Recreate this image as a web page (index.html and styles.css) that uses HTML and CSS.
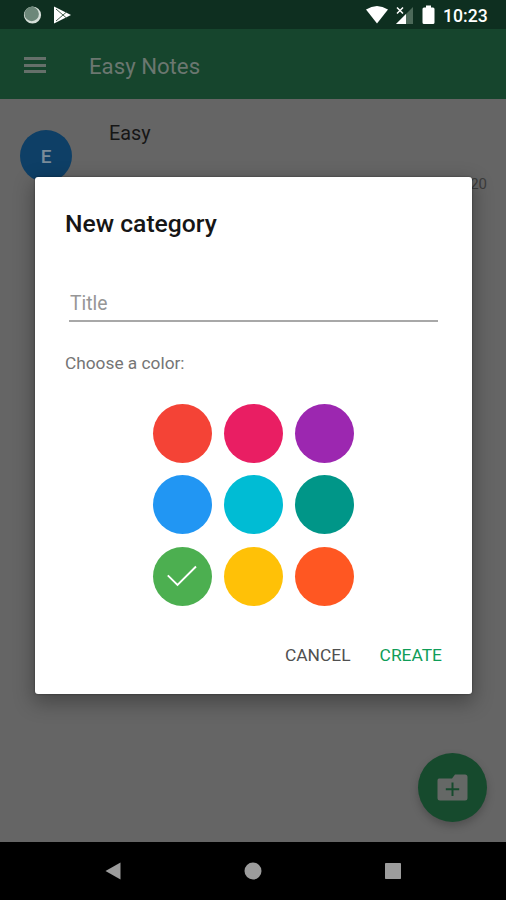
FILE: index.html
```html
<!DOCTYPE html>
<html lang="en">
<head>
<meta charset="utf-8">
<title>Easy Notes</title>
<link rel="stylesheet" href="styles.css">
</head>
<body>
<div class="screen">
  <header class="status">
    <svg class="status-left" width="50" height="20" viewBox="0 0 50 20">
      <circle cx="9.5" cy="10" r="8.6" fill="#d5ded8"/>
      <circle cx="8.7" cy="9" r="7.2" fill="#6c8779"/>
      <path d="M31 1.5 L48 10 L31 18.500Z" fill="#fff"/>
      <path d="M33 4 L43.500 13 M33 16 L43.500 7" stroke="#48604f" stroke-width="1" fill="none"/>
    </svg>
    <div class="status-right">
      <svg width="70" height="20" viewBox="0 0 70 20">
        <path d="M0 4.600 Q11 -2.600 22 4.600 L11 18.500Z" fill="#fff"/>
        <path d="M47 2 V19 H30Z" fill="#4c6959"/>
        <path d="M40 9 V19 H30Z" fill="#fff"/>
        <path d="M31 2.500 L37 8.500 M37 2.500 L31 8.500" stroke="#fff" stroke-width="1.500"/>
        <path d="M60 0.500 H65 V2.500 H67 Q68.500 2.500 68.500 4 V17.500 Q68.500 19 67 19 H58 Q56.500 19 56.500 17.500 V4 Q56.500 2.500 58 2.500 H60Z" fill="#fff"/>
      </svg>
      <span class="clock">10:23</span>
    </div>
  </header>
  <div class="appbar">
    <div class="menu"><i></i><i></i><i></i></div>
    <h1 class="app-title">Easy Notes</h1>
  </div>
  <main class="content">
    <div class="note">
      <div class="avatar">E</div>
      <div class="note-title">Easy</div>
      <div class="note-date">20</div>
    </div>
    <div class="fab">
      <svg width="31" height="27" viewBox="0 0 31 27">
        <path d="M2 4.500 H15 L18 0.500 H28 Q30.500 0.500 30.500 3 V24 Q30.500 26.500 28 26.500 H3 Q0.500 26.500 0.500 24 V6.500 Q0.500 4.500 2 4.500Z" fill="#656866"/>
        <path d="M15.500 8.500 V22 M8.800 15.300 H22.200" stroke="#164a2d" stroke-width="2"/>
      </svg>
    </div>
  </main>
  <nav class="navbar">
    <svg width="16" height="18" viewBox="0 0 16 18"><path d="M0.500 9 L15.500 0.500 V17.500Z" fill="#9c9c9c"/></svg>
    <svg width="18" height="18" viewBox="0 0 18 18"><circle cx="9" cy="9" r="8.500" fill="#9c9c9c"/></svg>
    <svg width="16" height="16" viewBox="0 0 16 16"><rect width="16" height="16" rx="0.700" fill="#9c9c9c"/></svg>
  </nav>
  <section class="dialog">
    <h2 class="dialog-title">New category</h2>
    <div class="field">Title</div>
    <p class="label">Choose a color:</p>
    <div class="swatches">
      <div class="swatch red"></div>
      <div class="swatch pink"></div>
      <div class="swatch purple"></div>
      <div class="swatch blue"></div>
      <div class="swatch cyan"></div>
      <div class="swatch teal"></div>
      <div class="swatch green">
        <svg width="30" height="22" viewBox="0 0 30 22"><path d="M0.800 10.300 L10.500 20 L29 1.500" fill="none" stroke="#fff" stroke-width="1.900"/></svg>
      </div>
      <div class="swatch amber"></div>
      <div class="swatch orange"></div>
    </div>
    <div class="actions">
      <span class="action">CANCEL</span>
      <span class="action primary">CREATE</span>
    </div>
  </section>
</div>
</body>
</html>
```
FILE: styles.css
```css
* { box-sizing: border-box; }
body { margin: 0; font-family: Roboto, "Liberation Sans", sans-serif; }
h1, h2, p { margin: 0; font-weight: 400; }
svg { display: block; }
.screen {
  position: relative;
  display: flex;
  flex-direction: column;
  width: 506px;
  height: 900px;
  overflow: hidden;
  background: #656565;
}
.status {
  display: flex;
  justify-content: space-between;
  height: 29px;
  padding: 5px 18px 0 23px;
  background: #0e2f20;
}
.status-right { display: flex; gap: 7px; }
.clock {
  color: #fff;
  font-size: 17.600px;
  font-weight: 500;
  line-height: 22px;
  width: 45px;
  white-space: nowrap;
}
.appbar {
  display: flex;
  align-items: center;
  height: 70px;
  padding: 2px 24px 0;
  background: #16452d;
}
.menu { display: flex; flex-direction: column; gap: 3.500px; width: 22px; margin-right: 43px; }
.menu i { height: 3px; background: #65706a; }
.app-title { padding-top: 1px; color: #6b7770; font-size: 22.200px; line-height: 28px; }
.content { position: relative; flex: 1; }
.note { display: flex; padding: 31px 19px 0 20px; }
.avatar {
  width: 52px;
  height: 52px;
  border-radius: 50%;
  background: #0e3f66;
  color: #7b8c99;
  font-size: 19px;
  font-weight: 500;
  line-height: 54px;
  text-align: center;
}
.note-title { margin: -9px 0 0 37px; color: #161616; font-size: 19.800px; line-height: 26px; }
.note-date { margin: 44px 0 0 auto; color: #3c3c3c; font-size: 15px; line-height: 20px; }
.fab {
  position: absolute;
  right: 19px;
  bottom: 20px;
  display: flex;
  align-items: center;
  justify-content: center;
  width: 69px;
  height: 69px;
  border-radius: 50%;
  background: #164a2d;
  box-shadow: 0 4px 8px rgba(0, 0, 0, .22);
}
.navbar {
  display: flex;
  align-items: center;
  justify-content: space-between;
  height: 58px;
  padding: 0 105px;
  background: #000;
}
.dialog {
  position: absolute;
  left: 35px;
  top: 177px;
  display: flex;
  flex-direction: column;
  width: 437px;
  height: 517px;
  padding: 31px 30px 0;
  border-radius: 3px;
  background: #fff;
  box-shadow: 0 0 2px rgba(0, 0, 0, .5), 0 7px 20px 2px rgba(0, 0, 0, .3);
}
.dialog-title { color: #161616; font-size: 24.700px; font-weight: 500; line-height: 32px; }
.field {
  height: 33px;
  margin: 49px 4px 0;
  padding: 1px 0 0 1px;
  border-bottom: 2px solid #a8a8a8;
  color: #969696;
  font-size: 19.300px;
  line-height: 28px;
}
.label { margin-top: 29px; color: #757575; font-size: 17.300px; line-height: 24px; }
.swatches {
  display: grid;
  grid-template-columns: repeat(3, 59px);
  gap: 12.300px;
  justify-content: center;
  margin-top: 29px;
}
.swatch {
  display: flex;
  align-items: center;
  justify-content: center;
  height: 59px;
  border-radius: 50%;
}
.red { background: #f44336; }
.pink { background: #e91e63; }
.purple { background: #9c27b0; }
.blue { background: #2196f3; }
.cyan { background: #00bcd4; }
.teal { background: #009688; }
.green { background: #4caf50; }
.amber { background: #ffc107; }
.orange { background: #ff5722; }
.actions { display: flex; justify-content: flex-end; gap: 29px; margin-top: 37px; }
.action { color: #505050; font-size: 17.400px; line-height: 24px; }
.primary { color: #0f9d58; }
```
